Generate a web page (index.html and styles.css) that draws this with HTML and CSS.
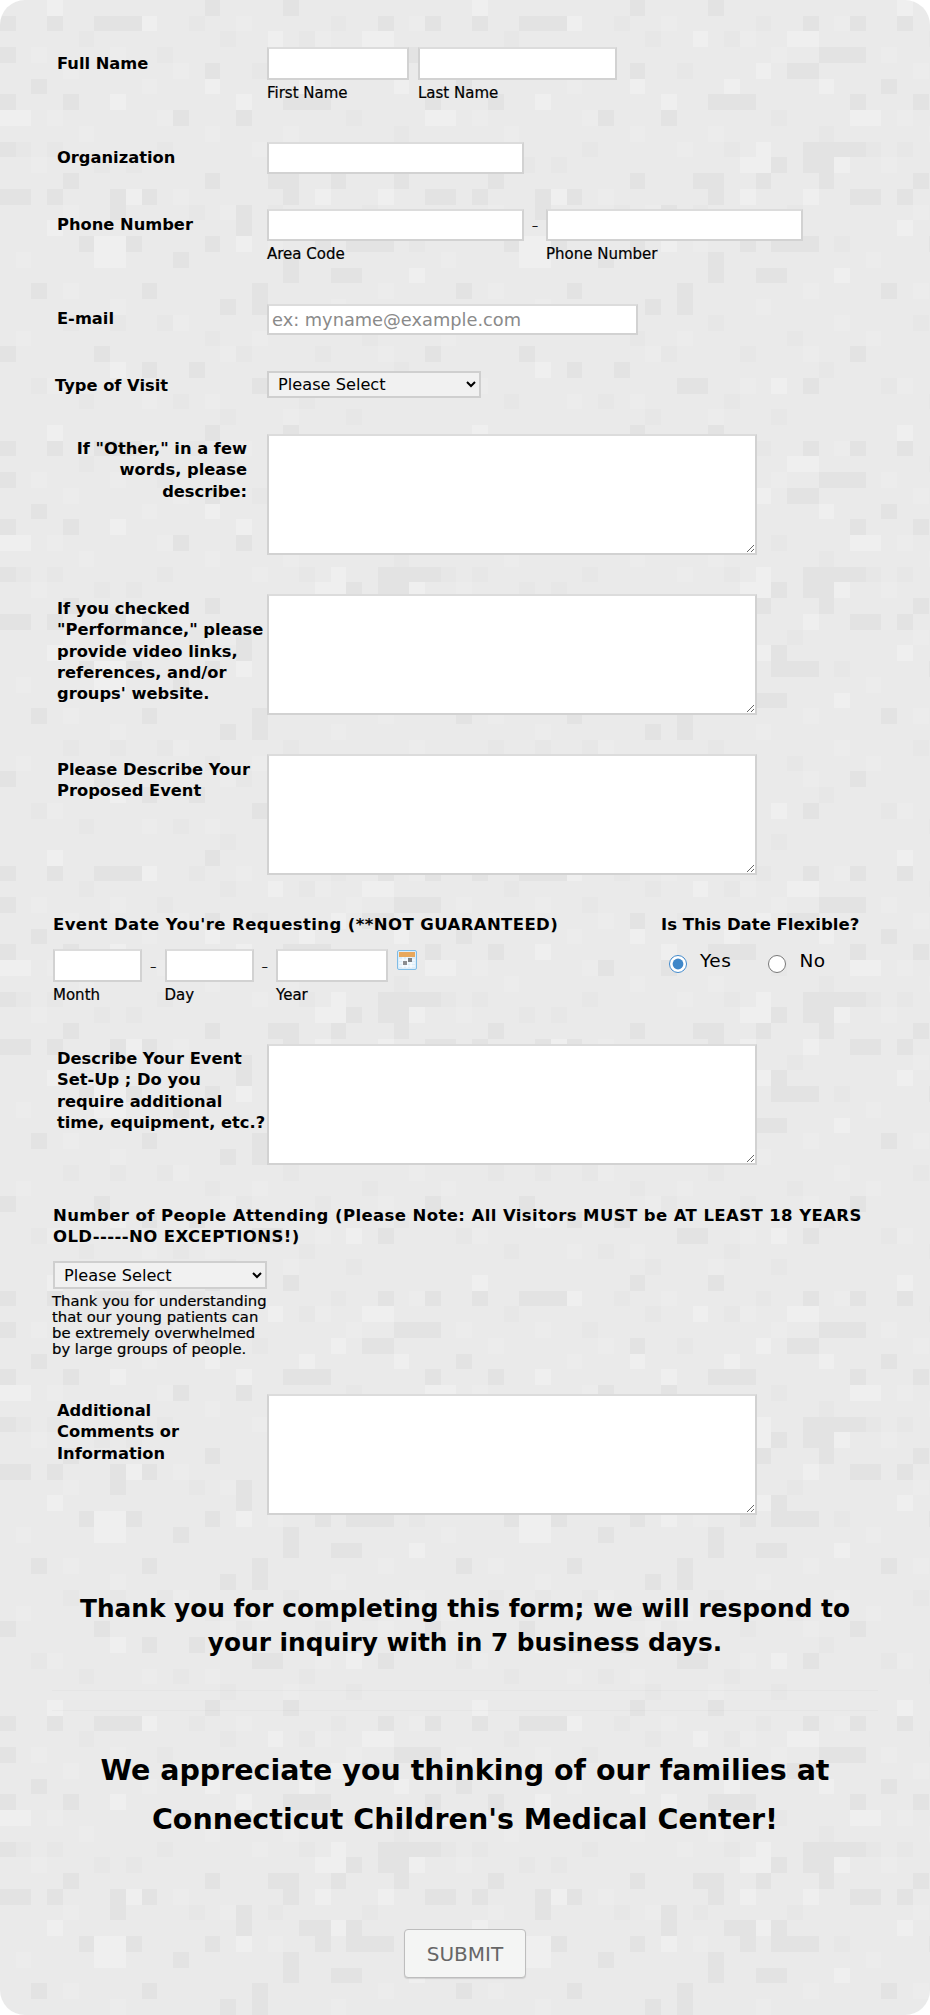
FILE: index.html
```html
<!DOCTYPE html>
<html lang="en">
<head>
<meta charset="utf-8">
<title>Visit Request Form</title>
<link rel="stylesheet" href="styles.css">
</head>
<body>
<form class="page">
  <div class="row row-name">
    <label class="label lab-name">Full Name</label>
    <div class="field">
      <input class="in w-first" type="text"><span class="sub">First Name</span>
    </div>
    <div class="field field-last">
      <input class="in w-last" type="text"><span class="sub">Last Name</span>
    </div>
  </div>
  <div class="row row-org">
    <label class="label lab-5">Organization</label>
    <input class="in w-phone h-32" type="text">
  </div>
  <div class="row row-phone">
    <label class="label lab-5">Phone Number</label>
    <div class="field">
      <input class="in w-phone h-32" type="text"><span class="sub">Area Code</span>
    </div>
    <span class="dash dash-phone">–</span>
    <div class="field">
      <input class="in w-phone h-32" type="text"><span class="sub">Phone Number</span>
    </div>
  </div>
  <div class="row row-mail">
    <label class="label lab-4">E-mail</label>
    <input class="in w-mail h-31" type="text" placeholder="ex: myname@example.com">
  </div>
  <div class="row row-type">
    <label class="label lab-4 lab-type">Type of Visit</label>
    <select class="sel w-sel"><option>Please Select</option></select>
  </div>
  <div class="row row-ta">
    <label class="label lab-4 lab-right">If "Other," in a few<br>words, please<br>describe:</label>
    <textarea class="ta"></textarea>
  </div>
  <div class="row row-ta">
    <label class="label lab-4">If you checked<br>"Performance," please<br>provide video links,<br>references, and/or<br>groups' website.</label>
    <textarea class="ta"></textarea>
  </div>
  <div class="row row-ta-tall">
    <label class="label lab-5">Please Describe Your<br>Proposed Event</label>
    <textarea class="ta"></textarea>
  </div>

  <div class="date-row">
    <div class="date-col">
      <div class="heading heading-wide">Event Date You're Requesting (**NOT GUARANTEED)</div>
      <div class="date-fields">
        <div class="field"><input class="in w-day" type="text"><span class="sub">Month</span></div>
        <span class="dash dash-date">–</span>
        <div class="field"><input class="in w-day" type="text"><span class="sub">Day</span></div>
        <span class="dash dash-date">–</span>
        <div class="field"><input class="in w-year" type="text"><span class="sub">Year</span></div>
        <svg class="cal" width="20" height="20" viewBox="0 0 20 20" aria-hidden="true">
          <rect x=".5" y=".5" width="19" height="19" rx="1.5" fill="#dcedf9" stroke="#7fbce6"/>
          <rect x="2" y="2" width="16" height="5" fill="#e8a85c"/>
          <path d="M2 10h16M2 13h16M2 16h16M6 7v11M10 7v11M14 7v11" stroke="#fff" stroke-width="1"/>
          <rect x="6" y="11" width="4" height="4" fill="#8a8d90"/>
          <rect x="11" y="8" width="4" height="4" fill="#7c8084"/>
        </svg>
      </div>
    </div>
    <div class="flex-col">
      <div class="heading">Is This Date Flexible?</div>
      <div class="radios">
        <label class="radio"><input type="radio" name="flex" checked>Yes</label>
        <label class="radio"><input type="radio" name="flex">No</label>
      </div>
    </div>
  </div>

  <div class="row row-ta">
    <label class="label lab-4">Describe Your Event<br>Set-Up ; Do you<br>require additional<br>time, equipment, etc.?</label>
    <textarea class="ta"></textarea>
  </div>

  <div class="people">
    <div class="heading heading-wide heading-people">Number of People Attending (Please Note: All Visitors MUST be AT LEAST 18 YEARS<br>OLD-----NO EXCEPTIONS!)</div>
    <select class="sel w-sel sel-people"><option>Please Select</option></select>
    <p class="note">Thank you for understanding<br>that our young patients can<br>be extremely overwhelmed<br>by large groups of people.</p>
  </div>

  <div class="row row-last">
    <label class="label lab-name">Additional<br>Comments or<br>Information</label>
    <textarea class="ta"></textarea>
  </div>

  <h2 class="thanks">Thank you for completing this form; we will respond to<br>your inquiry with in 7 business days.</h2>
  <div class="spacer"></div>
  <h2 class="appreciate">We appreciate you thinking of our families at<br>Connecticut Children's Medical Center!</h2>

  <div class="actions"><button class="submit" type="button">SUBMIT</button></div>
</form>
</body>
</html>
```

FILE: styles.css
```css
* { box-sizing: border-box; }
html, body { margin: 0; padding: 0; background: #fff; }
.page {
  width: 930px;
  height: 2015px;
  padding-top: 47px;
  border-radius: 25px;
  overflow: hidden;
  color: #000;
  font-family: "DejaVu Sans", sans-serif;
  background-color: #eaeaea;
  background-size: 425px 425px;
  background-image: url("data:image/svg+xml,%3Csvg xmlns='http://www.w3.org/2000/svg' width='425' height='425' viewBox='0 0 27 27' shape-rendering='crispEdges'%3E%3Cpath fill='%23e7e7e7' d='M5 2h1v1h-1zM10 3h1v1h-1zM12 1h1v1h-1zM14 2h1v1h-1zM16 4h1v1h-1zM19 2h1v1h-1zM21 1h1v1h-1zM22 7h1v1h-1zM25 8h1v1h-1zM1 9h1v1h-1zM3 9h1v1h-1zM6 10h1v1h-1zM8 10h1v1h-1zM10 9h1v1h-1zM12 13h1v1h-1zM17 13h1v1h-1zM19 9h1v1h-1zM23 13h1v1h-1zM26 15h1v1h-1zM4 20h1v1h-1zM7 20h1v1h-1zM10 20h1v1h-1zM13 21h1v1h-1zM15 22h1v1h-1zM18 20h1v1h-1zM20 22h1v1h-1zM23 21h1v1h-1zM25 23h1v1h-1zM2 24h1v1h-1zM5 25h1v1h-1zM11 25h1v1h-1zM14 26h1v1h-1zM19 25h1v1h-1zM22 26h1v1h-1z'/%3E%3Cpath fill='%23ececec' d='M2 3h1v1h-1zM4 4h1v1h-1zM7 3h1v1h-1zM9 5h1v1h-1zM11 4h1v1h-1zM15 1h1v1h-1zM20 2h1v1h-1zM22 3h1v1h-1zM26 1h1v1h-1zM3 7h1v1h-1zM5 8h1v1h-1zM10 7h1v1h-1zM13 8h1v1h-1zM16 9h1v1h-1zM18 8h1v1h-1zM2 10h1v1h-1zM4 13h1v1h-1zM11 12h1v1h-1zM14 13h1v1h-1zM17 15h1v1h-1zM21 19h1v1h-1zM24 18h1v1h-1zM1 16h1v1h-1zM4 18h1v1h-1zM7 19h1v1h-1zM11 20h1v1h-1zM14 22h1v1h-1zM16 21h1v1h-1zM20 24h1v1h-1zM24 22h1v1h-1zM1 21h1v1h-1zM3 24h1v1h-1zM9 25h1v1h-1zM13 25h1v1h-1zM18 26h1v1h-1zM26 20h1v1h-1z'/%3E%3Cpath fill='%23e3e3e3' d='M11 7h1v1h-1zM15 7h1v1h-1zM4 6h1v1h-1zM2 5h1v1h-1zM0 6h1v1h-1zM0 3h1v1h-1zM0 1h1v1h-1zM3 1h1v1h-1zM6 1h3v1h-3zM13 0h1v1h-1zM13 4h1v1h-1zM24 1h1v1h-1zM18 6h3v1h-3zM18 0h1v1h-1zM25 3h2v1h-2zM23 4h2v1h-2zM0 9h1v1h-1zM0 12h2v1h-2zM3 12h1v1h-1zM4 11h1v1h-1zM7 12h1v2h-1zM9 12h1v1h-1zM15 13h1v2h-1zM5 15h1v1h-1zM8 15h1v1h-1zM11 16h1v1h-1zM13 15h1v1h-1zM2 18h1v1h-1zM9 18h1v1h-1zM14 19h1v1h-1zM16 18h1v2h-1zM18 16h1v2h-1zM21 17h2v1h-2zM20 15h1v1h-1zM22 15h3v1h-3zM0 22h1v1h-1zM6 22h1v1h-1zM9 23h1v1h-1zM12 23h1v1h-1zM16 24h2v1h-2zM24 24h1v1h-1zM13 11h1v1h-1zM17 11h2v1h-2zM21 11h1v1h-1zM25 11h1v1h-1zM24 9h2v2h-2zM26 9h1v1h-1zM18 12h1v1h-1zM22 10h1v1h-1zM22 14h1v2h-1zM19 14h2v1h-2z'/%3E%3Cpath fill='%23efefef' d='M7 6h1v1h-1zM15 6h1v1h-1zM13 5h1v1h-1zM17 2h1v1h-1zM0 7h2v1h-2zM8 12h1v1h-1zM15 15h1v1h-1zM6 15h2v2h-2zM3 14h1v1h-1zM26 17h1v1h-1zM7 23h1v1h-1zM21 4h1v1h-1zM19 5h1v1h-1zM23 2h2v1h-2zM25 5h1v1h-1zM22 24h1v1h-1zM20 10h1v1h-1zM21 9h1v2h-1zM20 12h1v1h-1zM24 12h1v1h-1zM21 14h1v1h-1zM26 10h1v1h-1zM3 0h1v1h-1zM9 1h1v1h-1z'/%3E%3C/svg%3E");
}

/* rows */
.row { display: flex; align-items: flex-start; }
.row-name { margin-bottom: 41px; }
.row-org { margin-bottom: 35px; }
.row-phone { margin-bottom: 42px; }
.row-mail { margin-bottom: 36px; }
.row-type { margin-bottom: 36px; }
.row-ta { margin-bottom: 39px; }
.row-ta-tall { margin-bottom: 39px; }
.row-last { margin-bottom: 77px; }

.label {
  flex: none;
  width: 267px;
  padding-left: 57px;
  font-size: 16.3px;
  font-weight: 700;
  line-height: 21.3px;
  white-space: nowrap;
}
.lab-name { padding-top: 6px; }
.lab-5 { padding-top: 5px; }
.lab-4 { padding-top: 4px; }
.lab-type { padding-left: 55px; }
.lab-right { padding-left: 0; padding-right: 20px; text-align: right; }

/* fields */
.field { display: flex; flex-direction: column; flex: none; }
.field-last { margin-left: 9px; }
.in, .ta {
  display: block;
  background: #fff;
  border: 2px solid #d2d2d2;
  border-top-color: #dcdcdc;
  border-radius: 0;
  padding: 0 3px;
  margin: 0;
  outline: none;
  font-family: "DejaVu Sans", sans-serif;
}
.in { height: 33px; }
.h-32 { height: 32px; }
.h-31 { height: 31px; }
.w-first { width: 142px; }
.w-last { width: 199px; }
.w-phone { width: 257px; }
.w-mail { width: 371px; font-size: 17.8px; }
.w-mail::placeholder { color: #8a8a8a; opacity: 1; }
.w-day { width: 89px; }
.w-year { width: 112px; }
.sub {
  margin-top: 5px;
  font-size: 15px;
  line-height: 16px;
  white-space: nowrap;
  -webkit-text-stroke: .2px #000;
}
.dash {
  flex: none;
  text-align: center;
  font-size: 13px;
  font-weight: 400;
}
.dash-phone { width: 22px; line-height: 34px; }
.dash-date { width: 22.5px; line-height: 35px; }
.ta { width: 490px; height: 121px; }

.sel {
  display: block;
  height: 27px;
  padding: 0 0 0 5px;
  margin: 0;
  background-color: #f1f1f1;
  border: 2px solid #cfcfcf;
  border-radius: 0;
  color: #000;
  font-family: "DejaVu Sans", sans-serif;
  font-size: 16.2px;
}
.w-sel { width: 214px; }
.sel-people { height: 28px; margin-left: 53px; }

/* date row */
.date-row { display: flex; align-items: flex-start; padding-left: 53px; margin-bottom: 41px; }
.date-col { flex: none; width: 608px; }
.heading {
  font-size: 16.5px;
  font-weight: 700;
  line-height: 21px;
  white-space: nowrap;
}
.heading-wide { letter-spacing: .4px; }
.date-fields { display: flex; align-items: flex-start; margin-top: 14px; }
.cal { flex: none; margin: 1px 0 0 9px; }
.radios { display: flex; gap: 37px; margin-top: 15px; padding-left: 8px; }
.radio {
  display: flex;
  align-items: flex-start;
  font-size: 18.5px;
  line-height: 21px;
  letter-spacing: .5px;
}
.radio input {
  width: 18px;
  height: 18px;
  margin: 5px 13px 0 0;
  accent-color: #3f87c9;
}

/* people */
.people { margin-bottom: 37px; }
.heading-people { padding: 1px 0 0 53px; margin-bottom: 14px; }
.note {
  margin: 4px 0 0 52px;
  font-size: 14.8px;
  line-height: 16px;
  white-space: nowrap;
  -webkit-text-stroke: .2px #000;
}

/* closing text */
.thanks, .appreciate {
  margin: 0;
  text-align: center;
  font-weight: 700;
  white-space: nowrap;
}
.thanks { font-size: 24.8px; line-height: 34px; }
.appreciate { font-size: 28.5px; line-height: 49px; }
.spacer {
  height: 21px;
  margin: 30px 52px 35px;
  border-top: 1px solid rgba(0, 0, 0, .02);
  border-bottom: 1px solid rgba(0, 0, 0, .02);
}

.actions { display: flex; justify-content: center; margin-top: 85px; }
.submit {
  width: 122px;
  height: 49px;
  padding: 0;
  background: #f4f5f4;
  border: 1px solid #bdbdbd;
  border-radius: 4px;
  box-shadow: 0 1px 1px rgba(0, 0, 0, .12);
  color: #666;
  font-family: "DejaVu Sans", sans-serif;
  font-size: 20px;
}
```
